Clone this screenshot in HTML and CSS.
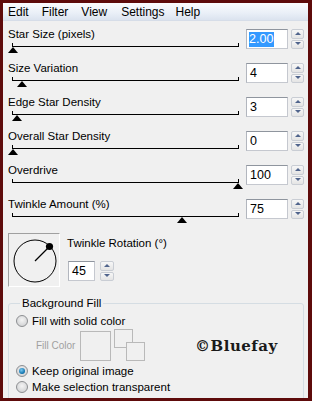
FILE: index.html
```html
<!DOCTYPE html>
<html lang="en">
<head>
    <meta charset="UTF-8">
    <title>Star Twinkle</title>
    <link rel="stylesheet" href="styles.css">
</head>
<body>
    <div class="window">
        <div class="menubar">
            <span>Edit</span><span>Filter</span><span>View</span><span>Settings</span><span>Help</span>
        </div>
        <div class="panel">
            <div class="row">
                <div class="ctl">
                    <div class="label">Star Size (pixels)</div>
                    <div class="slider"><span class="thumb" style="left:-4px"></span></div>
                </div>
                <div class="field"><span class="sel">2.00</span></div>
                <div class="spin"><span class="up"></span><span class="down"></span></div>
            </div>
            <div class="row">
                <div class="ctl">
                    <div class="label">Size Variation</div>
                    <div class="slider"><span class="thumb" style="left:5px"></span></div>
                </div>
                <div class="field">4</div>
                <div class="spin"><span class="up"></span><span class="down"></span></div>
            </div>
            <div class="row">
                <div class="ctl">
                    <div class="label">Edge Star Density</div>
                    <div class="slider"><span class="thumb" style="left:0px"></span></div>
                </div>
                <div class="field">3</div>
                <div class="spin"><span class="up"></span><span class="down"></span></div>
            </div>
            <div class="row">
                <div class="ctl">
                    <div class="label">Overall Star Density</div>
                    <div class="slider"><span class="thumb" style="left:-4px"></span></div>
                </div>
                <div class="field">0</div>
                <div class="spin"><span class="up"></span><span class="down"></span></div>
            </div>
            <div class="row">
                <div class="ctl">
                    <div class="label">Overdrive</div>
                    <div class="slider"><span class="thumb" style="left:221px"></span></div>
                </div>
                <div class="field">100</div>
                <div class="spin"><span class="up"></span><span class="down"></span></div>
            </div>
            <div class="row">
                <div class="ctl">
                    <div class="label">Twinkle Amount (%)</div>
                    <div class="slider"><span class="thumb" style="left:165px"></span></div>
                </div>
                <div class="field">75</div>
                <div class="spin"><span class="up"></span><span class="down"></span></div>
            </div>

            <div class="rotation">
                <div class="dial">
                    <svg width="50" height="52" viewBox="0 0 50 52">
                        <circle cx="26" cy="27" r="21" fill="none" stroke="#000" stroke-width="1"/>
                        <line x1="26" y1="27" x2="40" y2="13" stroke="#000" stroke-width="1.2"/>
                        <circle cx="40.5" cy="12.5" r="3.6" fill="#000"/>
                    </svg>
                </div>
                <div class="rot-ctl">
                    <div class="label">Twinkle Rotation (°)</div>
                    <div class="rot-input">
                        <div class="field small">45</div>
                        <div class="spin wide"><span class="up"></span><span class="down"></span></div>
                    </div>
                </div>
            </div>

            <fieldset class="group">
                <legend>Background Fill</legend>
                <div class="radio-row first"><span class="radio"></span>Fill with solid color</div>
                <div class="fill-row">
                    <span class="fill-label">Fill Color</span>
                    <span class="swatch"></span>
                    <span class="swap">
                        <span class="sq back"></span>
                        <span class="sq front"></span>
                    </span>
                    <span class="mark">©Bluefay</span>
                </div>
                <div class="radio-row"><span class="radio on"></span>Keep original image</div>
                <div class="radio-row"><span class="radio"></span>Make selection transparent</div>
            </fieldset>
        </div>
    </div>
</body>
</html>
```

FILE: styles.css
```css
html, body {
    margin: 0;
    padding: 0;
}
body {
    font-family: 'Liberation Sans', Arial, sans-serif;
    font-size: 11px;
    color: #000;
}
.window {
    box-sizing: border-box;
    width: 312px;
    height: 401px;
    border: 3px solid #5e0b0b;
    border-right-width: 4px;
    background: #f0f0f0;
    display: flex;
    flex-direction: column;
    overflow: hidden;
}
.menubar {
    height: 18px;
    box-sizing: border-box;
    border-bottom: 1px solid #d6dde8;
    background: linear-gradient(#fbfcfe, #e9eff7 60%, #dbe3ef);
    display: flex;
    align-items: center;
    padding-left: 5px;
    font-size: 12px;
}
.menubar span:nth-child(1) { margin-right: 13px; }
.menubar span:nth-child(2) { margin-right: 13px; }
.menubar span:nth-child(3) { margin-right: 14px; }
.menubar span:nth-child(4) { margin-right: 11px; }
.panel {
    flex: 1;
    padding: 6px 0 0 5px;
    overflow: hidden;
}
.row {
    display: flex;
    height: 34px;
}
.ctl {
    width: 231px;
}
.label {
    height: 14px;
    line-height: 14px;
    white-space: nowrap;
    font-size: 11.5px;
}
.slider {
    position: relative;
    height: 12px;
    margin: 1px 0 0 4px;
    width: 227px;
}
.slider::before {
    content: "";
    position: absolute;
    top: 1px;
    left: 0;
    right: 0;
    height: 3px;
    border: 1px solid #000;
    border-top: none;
}
.thumb {
    position: absolute;
    top: 5px;
    width: 0;
    height: 0;
    border-left: 5px solid transparent;
    border-right: 5px solid transparent;
    border-bottom: 6px solid #000;
}
.field {
    box-sizing: border-box;
    width: 42px;
    height: 20px;
    margin: 2px 0 0 7px;
    background: #fff;
    border: 1px solid #c5c8cf;
    border-top-color: #8f959e;
    border-left-color: #b2b6be;
    font-size: 12.5px;
    line-height: 18px;
    padding-left: 3px;
}
.sel {
    background: #3399ff;
    color: #fff;
    padding: 0 1px 1px 0;
    margin-left: -1px;
}
.spin {
    width: 13px;
    height: 20px;
    margin: 2px 0 0 3px;
    display: flex;
    flex-direction: column;
    gap: 1px;
}
.spin span {
    flex: 1;
    position: relative;
    box-sizing: border-box;
    border: 1px solid #c9cdd4;
    border-radius: 2px;
    background: linear-gradient(#f7f7f7, #e4e4e4);
}
.spin span::after {
    content: "";
    position: absolute;
    left: 50%;
    top: 50%;
    margin: -2px 0 0 -3px;
    border-left: 3px solid transparent;
    border-right: 3px solid transparent;
}
.spin .up::after {
    border-bottom: 3px solid #50648c;
}
.spin .down::after {
    border-top: 3px solid #50648c;
}
.spin.wide {
    width: 14px;
    margin-left: 5px;
}
.rotation {
    display: flex;
    margin-top: 2px;
}
.dial {
    width: 52px;
    height: 54px;
    box-sizing: border-box;
    border: 1px solid #a0a0a0;
    border-right-color: #fff;
    border-bottom-color: #fff;
}
.dial svg {
    display: block;
}
.rot-ctl {
    margin-left: 7px;
    padding-top: 3px;
}
.rot-input {
    display: flex;
    margin-top: 9px;
}
.field.small {
    width: 27px;
    margin-left: 1px;
}
.group {
    margin: 9px 4px 0 0;
    padding: 0 0 20px 7px;
    border: 1px solid #d5dde3;
    border-radius: 3px;
    height: 150px;
    font-size: 11.5px;
}
.group legend {
    padding: 0 2px;
    margin-left: 4px;
    line-height: 14px;
}
.radio-row {
    display: flex;
    align-items: center;
    height: 16px;
    white-space: nowrap;
}
.radio-row.first {
    margin-top: 3px;
}
.radio {
    box-sizing: border-box;
    width: 12px;
    height: 12px;
    border-radius: 50%;
    border: 1px solid #8d8f92;
    background: radial-gradient(circle at 50% 40%, #f4f4f4, #c9cacc);
    margin-right: 4px;
    position: relative;
}
.radio.on::after {
    content: "";
    position: absolute;
    left: 2px;
    top: 2px;
    width: 6px;
    height: 6px;
    border-radius: 50%;
    background: radial-gradient(circle at 40% 35%, #79c8f0, #0b6eaa 70%, #0a4e7d);
}
.fill-row {
    display: flex;
    align-items: center;
    height: 31px;
    margin: 1px 0 2px 0;
}
.fill-label {
    color: #a0a0a0;
    margin-left: 20px;
    width: 44px;
    white-space: nowrap;
    font-size: 10px;
}
.swatch {
    box-sizing: border-box;
    width: 31px;
    height: 30px;
    border: 1px solid #b9b9b9;
}
.swap {
    position: relative;
    width: 31px;
    height: 31px;
    margin-left: 3px;
}
.sq {
    position: absolute;
    box-sizing: border-box;
    width: 19px;
    height: 19px;
    border: 1px solid #b9b9b9;
    background: #f0f0f0;
}
.sq.back {
    left: 0;
    top: -1px;
}
.sq.front {
    left: 12px;
    top: 12px;
}
.mark {
    margin-left: 50px;
    font-family: 'DejaVu Serif', 'Liberation Serif', serif;
    font-weight: bold;
    font-size: 15px;
    color: #1a1a1a;
    letter-spacing: 0.5px;
}
```
